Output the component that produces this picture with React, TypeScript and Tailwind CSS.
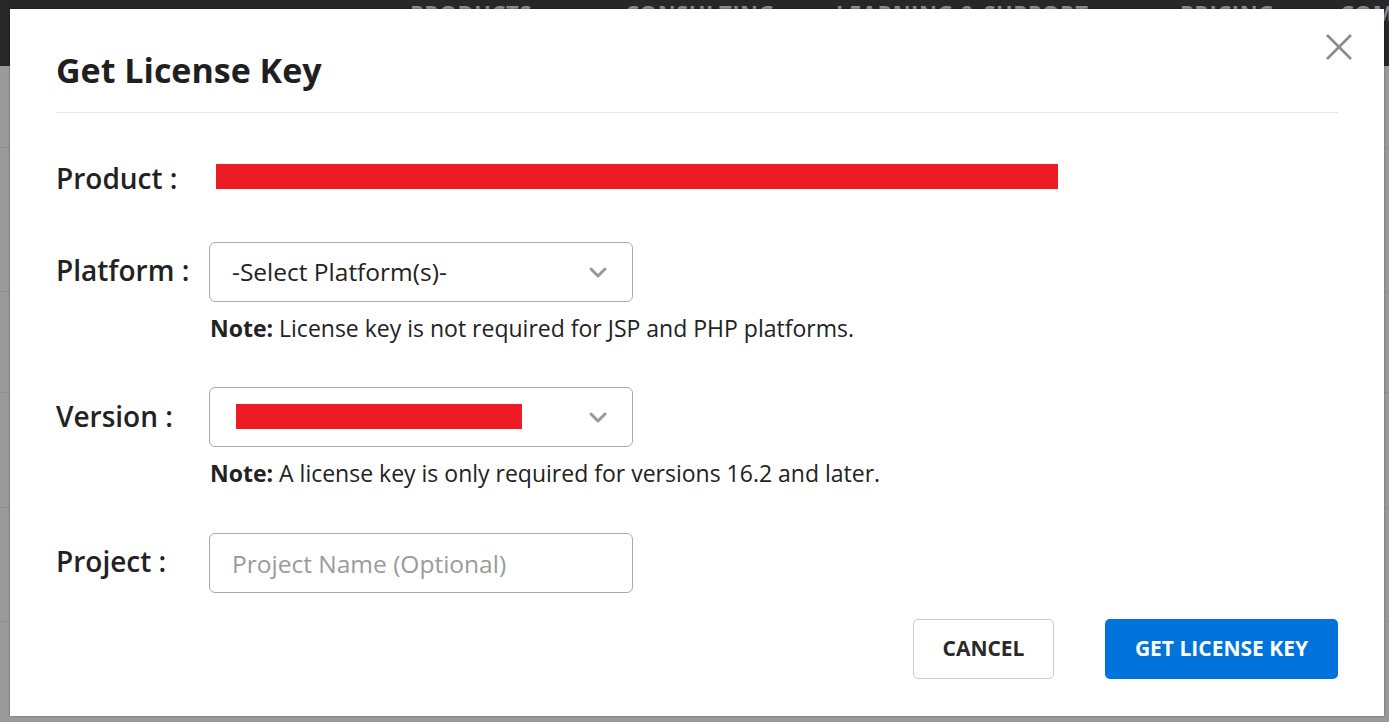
import React from "react";

function Chevron() {
  return (
    <svg width="20" height="14" viewBox="0 0 20 14" fill="none">
      <path d="M3 4l7 7 7-7" stroke="#999999" strokeWidth="3" strokeLinecap="round" strokeLinejoin="round" />
    </svg>
  );
}

function Background() {
  const rows = [82, 144, 101, 115, 114];
  return (
    <div className="absolute inset-0 flex flex-col bg-[#9a9a9a]">
      <div className="h-[66px] bg-[#272727] flex shrink-0">
        <div className="flex pl-[410px] text-[22px] font-bold text-[#8c8c8c] leading-[22px] pt-[1px] tracking-wide whitespace-nowrap">
          <span className="w-[215px]">PRODUCTS</span>
          <span className="w-[211px]">CONSULTING</span>
          <span className="w-[344px]">LEARNING &amp; SUPPORT</span>
          <span className="w-[160px]">PRICING</span>
          <span>COMPANY</span>
        </div>
      </div>
      <div className="flex flex-col">
        {rows.map((h, i) => (
          <div key={i} style={{ height: h }} className="border-b border-[#8f8f8f]" />
        ))}
      </div>
    </div>
  );
}

export default function App() {
  return (
    <div className="relative w-[1389px] h-[722px] overflow-hidden" style={{ fontFamily: '"Open Sans", "Noto Sans", sans-serif' }}>
      <Background />
      <div className="absolute left-[10px] top-[9px] w-[1374px] h-[707px] bg-white shadow-[0_0_2px_rgba(0,0,0,0.4)] px-[46px] text-[#222]">
        <button className="absolute right-[30px] top-[23px] w-[30px] h-[30px] flex items-center justify-center">
          <svg width="28" height="28" viewBox="0 0 28 28">
            <path d="M2 2l24 24M26 2L2 26" stroke="#8c8c8c" strokeWidth="2.6" />
          </svg>
        </button>
        <div className="pt-[38px] pb-[19px] border-b border-[#e6e6e6]">
          <h2 className="text-[34px] leading-[46px] font-bold text-[#1f1f1f]">Get License Key</h2>
        </div>

        <div className="flex items-center h-[40px] mt-[45px]">
          <div className="w-[160px] shrink-0 text-[28px] font-semibold">Product :</div>
          <div className="w-[842px] h-[25px] bg-[#ed1c24] -mt-[4px]" />
        </div>

        <div className="flex items-center mt-[44px]">
          <div className="w-[153px] shrink-0 text-[28px] font-semibold -mt-[4px]">Platform :</div>
          <div className="w-[424px] h-[60px] border border-[#aaaaaa] rounded-[6px] flex items-center justify-between pl-[22px] pr-[24px]">
            <span className="text-[24.5px] text-[#222]">-Select Platform(s)-</span>
            <Chevron />
          </div>
        </div>
        <div className="pl-[154px] mt-[12px] text-[23px] leading-[28px] text-[#222]">
          <span className="font-bold">Note:</span> License key is not required for JSP and PHP platforms.
        </div>

        <div className="flex items-center mt-[45px]">
          <div className="w-[153px] shrink-0 text-[28px] font-semibold -mt-[2px]">Version :</div>
          <div className="w-[424px] h-[60px] border border-[#aaaaaa] rounded-[6px] flex items-center justify-between pl-[26px] pr-[24px]">
            <div className="w-[286px] h-[25px] bg-[#ed1c24] -mt-[2px]" />
            <Chevron />
          </div>
        </div>
        <div className="pl-[154px] mt-[12px] text-[23px] leading-[28px] text-[#222]">
          <span className="font-bold">Note:</span> A license key is only required for versions 16.2 and later.
        </div>

        <div className="flex items-center mt-[46px]">
          <div className="w-[153px] shrink-0 text-[28px] font-semibold -mt-[4px]">Project :</div>
          <input
            className="w-[424px] h-[60px] border border-[#aaaaaa] rounded-[6px] pl-[22px] text-[24.5px] outline-none placeholder:text-[#9a9a9a]"
            placeholder="Project Name (Optional)"
          />
        </div>

        <div className="flex justify-end gap-[51px] mt-[26px]">
          <button className="w-[141px] h-[60px] border border-[#cccccc] rounded-[5px] bg-white text-[21px] font-bold text-[#2a2a2a]">
            CANCEL
          </button>
          <button className="w-[233px] h-[60px] rounded-[5px] bg-[#0074dc] text-[21px] font-bold text-white">
            GET LICENSE KEY
          </button>
        </div>
      </div>
    </div>
  );
}
